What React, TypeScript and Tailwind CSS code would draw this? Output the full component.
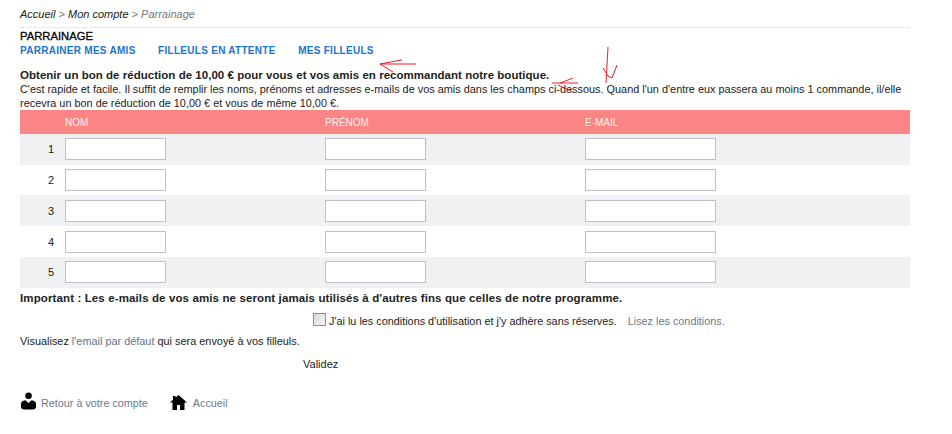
import { Fragment } from "react";

function UserIcon() {
  return (
    <svg width="15" height="18" viewBox="0 0 15 18" className="fill-black">
      <circle cx="7.500" cy="3.800" r="3.300" />
      <path d="M0 15v-3C0 10 1.500 8.800 4.400 8.300L7.500 11l3.100-2.700C13.500 8.800 15 10 15 12v3c0 1.500-1.500 2.500-3 2.500H3c-1.500 0-3-1-3-2.500z" />
    </svg>
  );
}

function HomeIcon() {
  return (
    <svg width="17" height="15" viewBox="0 0 17 15" className="fill-black">
      <path d="M8.500 0 17 7.500h-2.500V15H10v-5H7v5H2.500V7.500H0L3 4.800V1h2.500v1.600z" />
    </svg>
  );
}

// the rows are not all the same height in the page
const rows = [
  { n: 1, cell: "h-[31px] pt-1 bg-[#f0f1f3]" },
  { n: 2, cell: "h-[30px] pt-1 bg-white" },
  { n: 3, cell: "h-[31px] pt-[5px] bg-[#f0f1f3]" },
  { n: 4, cell: "h-[31px] pt-[5px] bg-white" },
  { n: 5, cell: "h-[31px] pt-1 bg-[#f0f1f3]" },
];

export default function App() {
  return (
    <div className="relative h-[434px] w-[952px] overflow-hidden bg-white pl-5 pr-[42px] font-['Liberation_Sans',Arial,sans-serif] text-[11px] leading-[13px] text-[#222]">
      <div className="h-[28px] border-b border-dotted border-[#ddd] pt-2 italic text-[#777]">
        <span className="text-[#222]">Accueil</span> &gt; <span className="text-[#222]">Mon compte</span> &gt; Parrainage
      </div>

      <h1 className="mt-[1px] text-[11.250px] leading-[14px] font-normal text-black [-webkit-text-stroke:0.3px_black]">PARRAINAGE</h1>
      <nav className="mt-[1px] flex gap-[22.500px] text-[10px] leading-[13px] font-bold tracking-[0.28px] text-[#1a75cf]">
        <a>PARRAINER MES AMIS</a>
        <a>FILLEULS EN ATTENTE</a>
        <a>MES FILLEULS</a>
      </nav>

      <p className="mt-[11px] text-[11.500px] leading-[14px] font-bold tracking-[0.03px]">
        Obtenir un bon de réduction de 10,00 € pour vous et vos amis en recommandant notre boutique.
      </p>
      <p className="text-[10.900px] leading-[14px]">
        C'est rapide et facile. Il suffit de remplir les noms, prénoms et adresses e-mails de vos amis dans les champs ci-dessous. Quand l'un d'entre eux passera au moins 1 commande, il/elle recevra un bon de réduction de 10,00 € et vous de même 10,00 €.
      </p>

      <div className="grid grid-cols-[45px_260px_260px_325px]">
        <div className="h-6 bg-[#fb8585]" />
        {["NOM", "PRÉNOM", "E-MAIL"].map((label) => (
          <div key={label} className="flex h-6 items-center bg-[#fb8585] text-[10px] text-[#fff0ee]">
            {label}
          </div>
        ))}
        {rows.map((row) => (
          <Fragment key={row.n}>
            <div className={row.cell}>
              <div className="flex h-[22px] items-center justify-end pr-[11px]">{row.n}</div>
            </div>
            <div className={row.cell}>
              <input className="block h-[22px] w-[101px] border border-[#bfc1c6] bg-white" />
            </div>
            <div className={row.cell}>
              <input className="block h-[22px] w-[101px] border border-[#bfc1c6] bg-white" />
            </div>
            <div className={row.cell}>
              <input className="block h-[22px] w-[131px] border border-[#bfc1c6] bg-white" />
            </div>
          </Fragment>
        ))}
      </div>

      <p className="mt-[3px] text-[11.500px] leading-[14px] font-bold tracking-[0.12px]">
        Important : Les e-mails de vos amis ne seront jamais utilisés à d'autres fins que celles de notre programme.
      </p>

      <div className="mt-[10px] flex items-center pl-[293px] text-[10.850px]">
        <span className="-mt-1 h-[13px] w-[13px] border border-[#8e8f8f] bg-gradient-to-br from-[#d8d8d8] to-[#f4f4f4]" />
        <span className="ml-[3px]">J'ai lu les conditions d'utilisation et j'y adhère sans réserves.</span>
        <a className="ml-[11px] text-[#6b7a8c]">Lisez les conditions.</a>
      </div>

      <p className="mt-[7px] text-[10.900px]">
        Visualisez <a className="text-[#5b7590]">l'email par défaut</a> qui sera envoyé à vos filleuls.
      </p>

      <div className="mt-[10px] pl-[283px]">Validez</div>

      <div className="mt-[21px] flex items-center pl-[1px] text-[10.800px] text-[#6f7a8a]">
        <UserIcon />
        <span className="ml-[5px] mt-1">Retour à votre compte</span>
        <span className="ml-[22px] mt-[2px] flex"><HomeIcon /></span>
        <span className="ml-[6px] mt-1">Accueil</span>
      </div>

      <svg className="pointer-events-none absolute left-0 top-0" width="952" height="434" fill="none" stroke="#ee1c25" strokeWidth="1">
        <path d="M416 64 380 64 396 61 402 60M380 64 393 72" />
        <path d="M552 83 H578M560 83 L568 80 L573 78M558 85 L573 92" />
        <path d="M608 47 L606 83M603 68 L608 76 L612 78 L617 65" />
      </svg>
    </div>
  );
}
